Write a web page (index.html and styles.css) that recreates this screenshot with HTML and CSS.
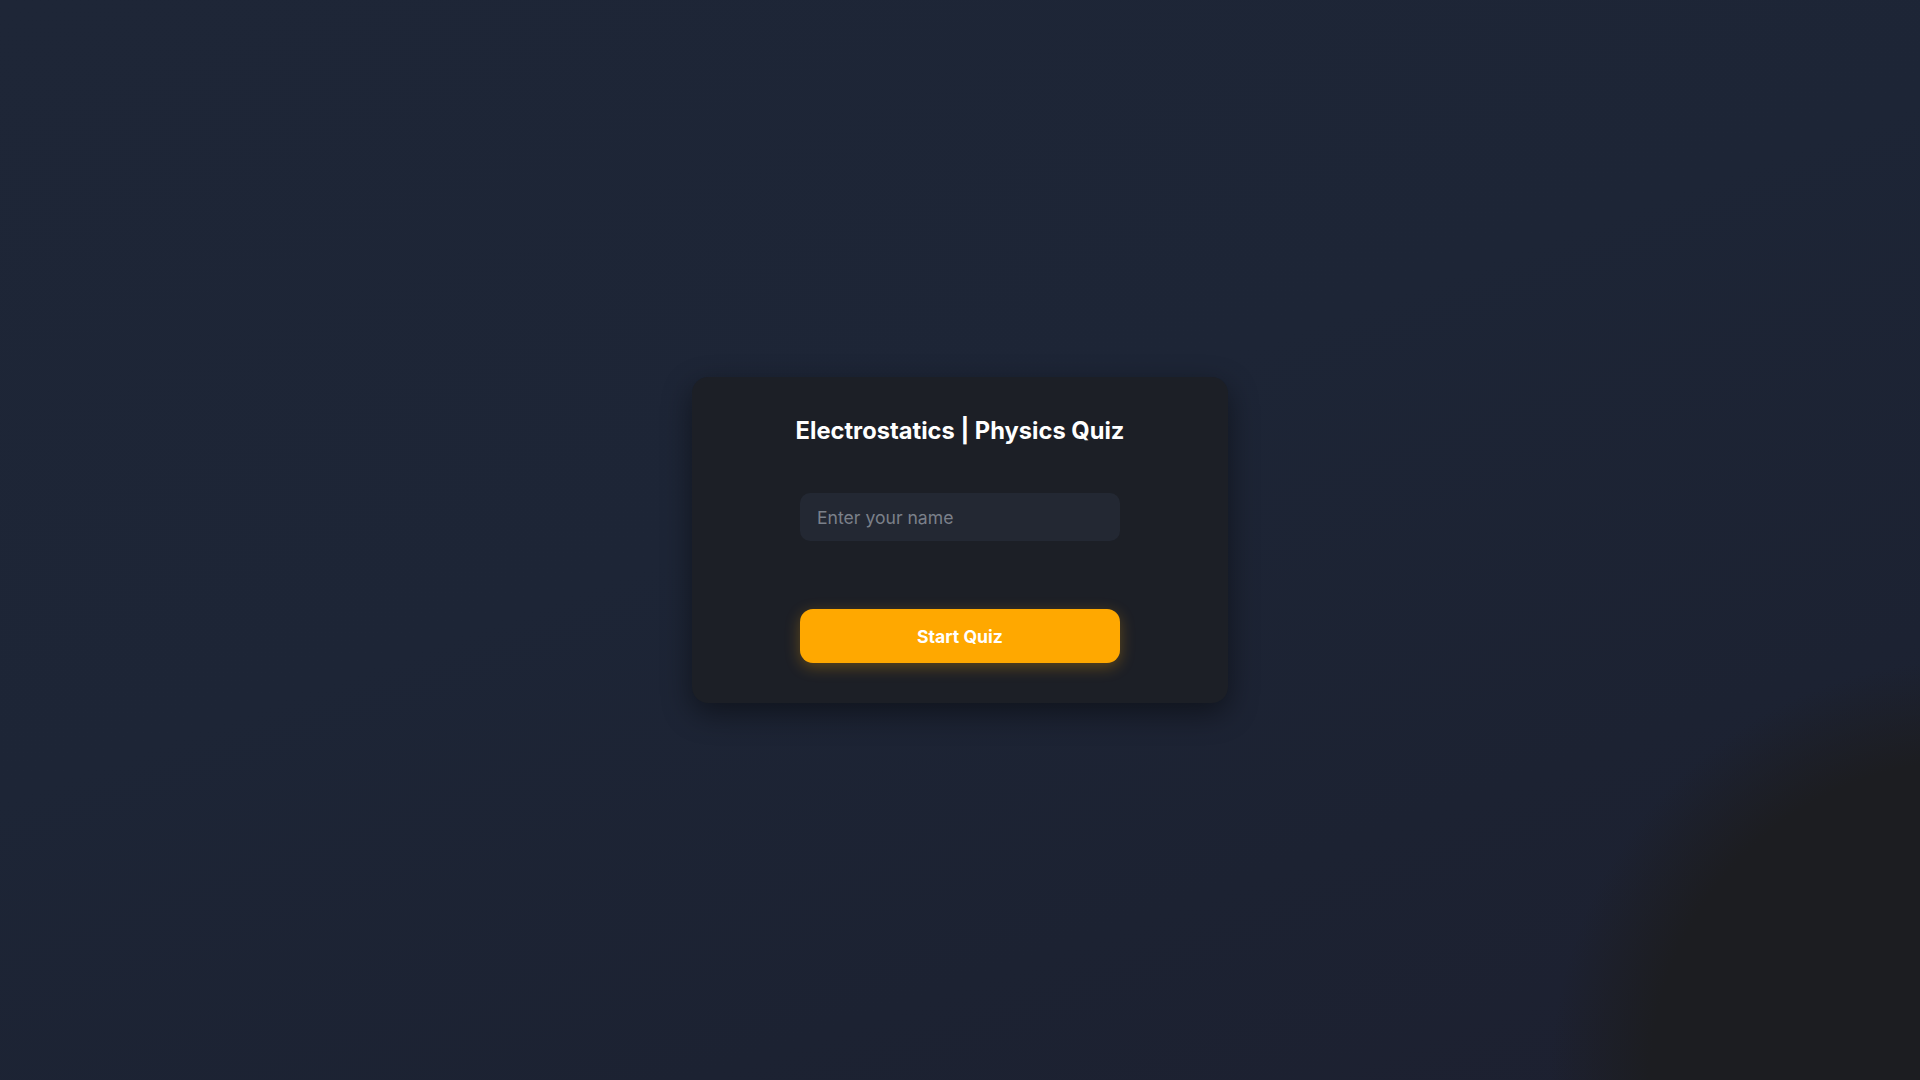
FILE: index.html
```html
<!DOCTYPE html>
<html lang="en">
<head>
<meta charset="utf-8">
<title>Electrostatics | Physics Quiz</title>
<link rel="stylesheet" href="styles.css">
</head>
<body>
<main class="page">
  <section class="card">
    <h2 class="title">Electrostatics | Physics Quiz</h2>
    <input class="name-input" type="text" placeholder="Enter your name">
    <button class="start-btn" type="button">Start Quiz</button>
  </section>
</main>
</body>
</html>
```

FILE: styles.css
```css
* { box-sizing: border-box; }
html, body {
  margin: 0;
  height: 100%;
}
body {
  font-family: Inter, "Noto Sans", "Liberation Sans", sans-serif;
  background:
    radial-gradient(circle 420px at 1970px 1080px, #1c1d21 0%, #1c1d21 76%, rgba(28,29,33,0) 100%),
    linear-gradient(160deg, #1e2637 0%, #1d2536 45%, #1c2232 75%, #1d2030 100%);
  color: #fff;
}
.page {
  height: 100vh;
  display: flex;
  align-items: center;
  justify-content: center;
}
.card {
  width: 536px;
  padding: 39px 40px 40px;
  background: #1c1f26;
  border-radius: 16px;
  box-shadow: 0 10px 30px rgba(0, 0, 0, 0.45);
  display: flex;
  flex-direction: column;
  align-items: center;
}
.title {
  margin: 0 0 48px;
  font-size: 23.7px;
  line-height: 29px;
  font-weight: 700;
  color: #ffffff;
}
.name-input {
  width: 320px;
  height: 48px;
  padding: 0 17px;
  border: none;
  border-radius: 10px;
  background: #232833;
  color: #fff;
  font-family: inherit;
  font-size: 17.6px;
  outline: none;
}
.name-input::placeholder {
  color: #7b808a;
}
.start-btn {
  margin-top: 68px;
  width: 320px;
  height: 54px;
  border: none;
  border-radius: 13px;
  background: #ffa800;
  color: #fff;
  font-family: inherit;
  font-size: 17.6px;
  font-weight: 700;
  box-shadow: 0 4px 15px rgba(255, 168, 0, 0.3);
  cursor: pointer;
}
```
